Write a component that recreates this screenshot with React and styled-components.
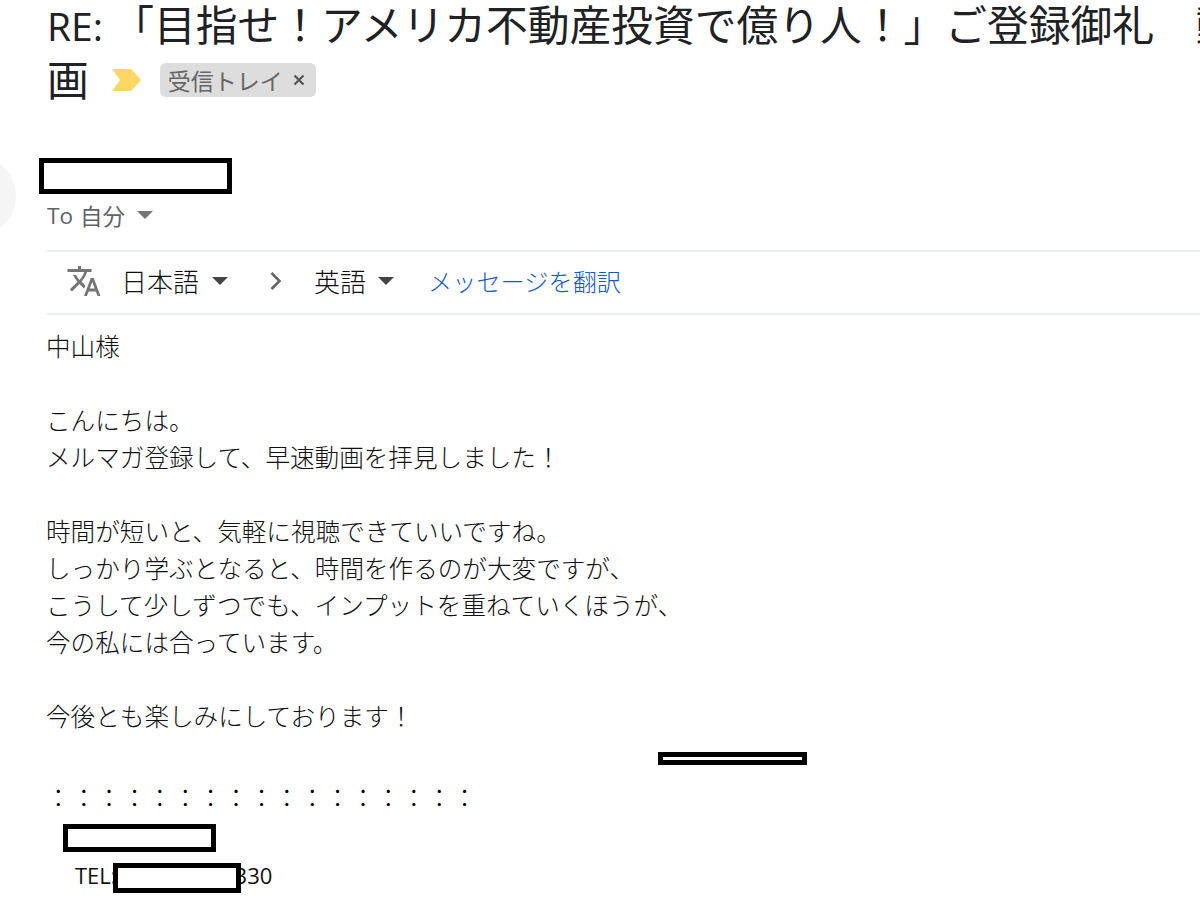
import React from "react";
import styled, { createGlobalStyle } from "styled-components";

const Global = createGlobalStyle`
html, body {
  margin: 0;
  background: #fff;
  overflow: hidden;
}
`

const jp = `"Noto Sans CJK JP", "Open Sans", sans-serif`

const Page = styled.div`
  width: 1200px;
  height: 902px;
  overflow: hidden;
  font-family: ${jp};
  font-weight: 300;
  color: #111;
`

const Subject = styled.div`
  width: 1250px;
  margin-top: -5px;
  padding: 2px 0 0 47px;
  box-sizing: border-box;
  font-size: 41.75px;
  line-height: 52px;
  height: 113px;
  color: #202124;
  font-weight: 400;
  span.re { font-family: "Open Sans", sans-serif; font-size: 39px; }
`

const Chevron = styled.svg`
  width: 31px;
  height: 24px;
  margin: 0 18px 0 22px;
  vertical-align: 4px;
`

const Label = styled.span`
  display: inline-flex;
  align-items: center;
  height: 34px;
  padding: 0 11px 0 8px;
  gap: 10px;
  border-radius: 6px;
  background: #dddddd;
  color: #666;
  font-size: 23px;
  line-height: 34px;
  vertical-align: 6px;
`

const SenderRow = styled.div`
  display: flex;
  margin-top: 50px;
`

const Avatar = styled.div`
  width: 70px;
  height: 76px;
  margin-left: -54px;
  margin-right: 23px;
  border-radius: 50%;
  background: #f5f5f5;
`

const Sender = styled.div`
  display: flex;
  flex-direction: column;
`

const Redact = styled.div`
  box-sizing: border-box;
  width: ${p => p.$w}px;
  height: ${p => p.$h}px;
  border: ${p => p.$b || 4}px solid #000;
  background: #fff;
`

const ToLine = styled.div`
  display: flex;
  align-items: center;
  margin: 6px 0 0 8px;
  height: 30px;
  font-size: 22.5px;
  color: #5f6368;
  font-weight: 400;
  span.to { font-family: "Open Sans", sans-serif; margin-right: 7px; }
`

const Caret = styled.i`
  display: inline-block;
  width: 0;
  height: 0;
  margin-left: ${p => p.$ml || 12}px;
  border-left: 8px solid transparent;
  border-right: 8px solid transparent;
  border-top: 8px solid ${p => p.$c || "#777"};
`

const TranslateBar = styled.div`
  display: flex;
  align-items: center;
  height: 57px;
  margin: 16px 0 0 47px;
  padding: 0 0 4px 19px;
  border-top: 2px solid #eceff1;
  border-bottom: 2px solid #eceff1;
  font-size: 26px;
  color: #111;
`

const TIcon = styled.svg`
  width: 36px;
  height: 36px;
  margin-right: 19px;
`

const Arrow = styled.svg`
  width: 14px;
  height: 20px;
  margin: 0 31px 0 41px;
`

const TLink = styled.span`
  color: #1558d0;
  margin-left: 34px;
  font-size: 24.2px;
`

const Body = styled.div`
  margin: 12px 0 0 46px;
  font-size: 24.6px;
  line-height: 37px;
  color: #111;
`

const Blank = styled.div`
  height: 37px;
`

const MarkRow = styled.div`
  height: 37px;
  margin-top: 6px;
  display: flex;
  align-items: center;
  padding-left: 612px;
`

const Dots = styled.div`
  margin: 1px 0 0 0;
  height: 37px;
  line-height: 37px;
  letter-spacing: 0.8px;
  color: #000;
  white-space: nowrap;
`

const CompanyRow = styled.div`
  margin: 9px 0 0 17px;
`

const Tel = styled.div`
  display: flex;
  align-items: center;
  height: 37px;
  margin: 7px 0 0 29px;
  font-family: "Open Sans", sans-serif;
  font-size: 22px;
  color: #111;
  font-weight: 400;
`

const TelText = styled.span`
  margin-bottom: 4px;
`

const TelMask = styled(Redact)`
  margin: 0 -6px 0 -4px;
  position: relative;
`

const lines1 = ["時間が短いと、気軽に視聴できていいですね。", "しっかり学ぶとなると、時間を作るのが大変ですが、", "こうして少しずつでも、インプットを重ねていくほうが、", "今の私には合っています。"]

export default function App() {
  return (
    <>
      <Global />
      <Page>
        <Subject>
          <span className="re">RE:</span> 「目指せ！アメリカ不動産投資で億り人！」ご登録御礼　動画
          <Chevron viewBox="0 0 31 24">
            <path d="M1 1h19l10 11-10 11H1l8-11z" fill="#fdd663" />
          </Chevron>
          <Label>
            受信トレイ
            <svg width="12" height="12" viewBox="0 0 12 12">
              <path d="M1.5 1.5l9 9M10.5 1.5l-9 9" stroke="#555" strokeWidth="2.2" />
            </svg>
          </Label>
        </Subject>
        <SenderRow>
          <Avatar />
          <Sender>
            <Redact $w={193} $h={36} $b={5} />
            <ToLine>
              <span className="to">To</span> 自分
              <Caret />
            </ToLine>
          </Sender>
        </SenderRow>
        <TranslateBar>
          <TIcon viewBox="0 0 24 24">
            <path
              fill="#757575"
              d="M12.87 15.07l-2.54-2.51.03-.03A17.52 17.52 0 0 0 14.07 6H17V4h-7V2H8v2H1v2h11.17C11.5 7.92 10.44 9.75 9 11.35 8.07 10.32 7.3 9.19 6.69 8h-2c.73 1.63 1.73 3.17 2.98 4.56l-5.09 5.02L4 19l5-5 3.11 3.11.76-2.04zM18.5 10h-2L12 22h2l1.12-3h4.75L21 22h2l-4.5-12zm-2.62 7l1.62-4.33L19.12 17h-3.24z"
            />
          </TIcon>
          日本語
          <Caret $ml={13} $c="#444" />
          <Arrow viewBox="0 0 14 20">
            <path d="M2.5 2l8 8-8 8" fill="none" stroke="#666" strokeWidth="2.6" />
          </Arrow>
          英語
          <Caret $ml={12} $c="#444" />
          <TLink>メッセージを翻訳</TLink>
        </TranslateBar>
        <Body>
          <div>中山様</div>
          <Blank />
          <div>こんにちは。</div>
          <div>メルマガ登録して、早速動画を拝見しました！</div>
          <Blank />
          {lines1.map(t => <div key={t}>{t}</div>)}
          <Blank />
          <div>今後とも楽しみにしております！</div>
          <MarkRow>
            <Redact $w={149} $h={13} $b={5} />
          </MarkRow>
          <Dots>：：：：：：：：：：：：：：：：：</Dots>
          <CompanyRow>
            <Redact $w={153} $h={28} $b={5} />
          </CompanyRow>
          <Tel>
            <TelText>TEL:</TelText>
            <TelMask $w={128} $h={30} $b={5} />
            <TelText>330</TelText>
          </Tel>
        </Body>
      </Page>
    </>
  );
}
